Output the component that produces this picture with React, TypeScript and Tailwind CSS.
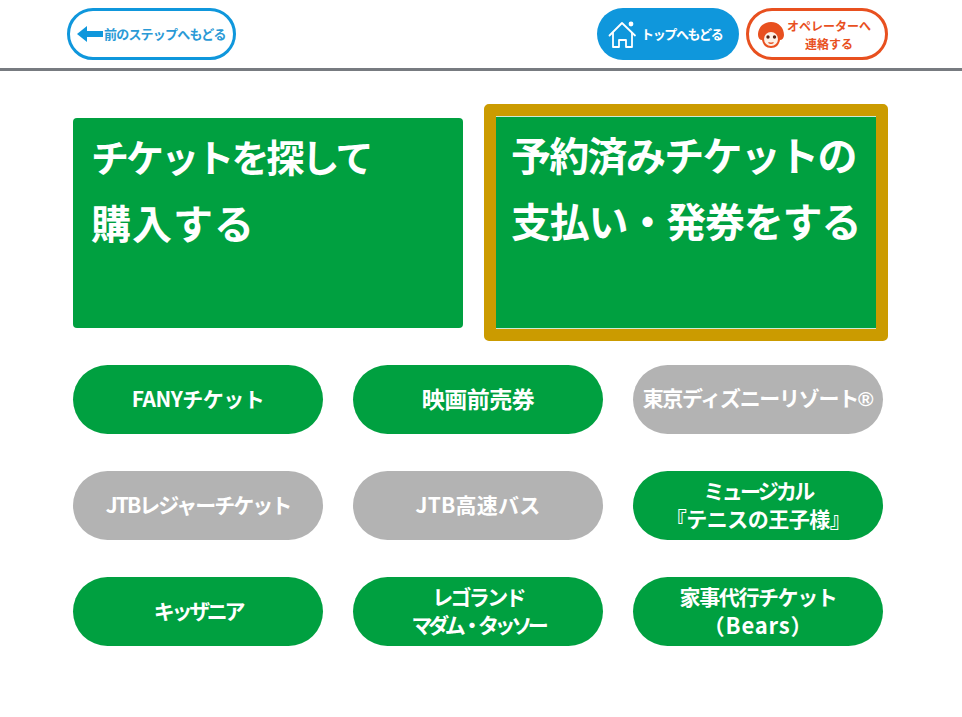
const font = { fontFamily: '"Noto Sans CJK JP", "Liberation Sans", sans-serif' };

const pills = [
  { lines: [{ text: 'FANYチケット', cls: 'tracking-[-0.5px]' }], on: true },
  { lines: [{ text: '映画前売券', cls: 'text-[23px] tracking-[-0.5px]' }], on: true },
  { lines: [{ text: '東京ディズニーリゾート', cls: 'tracking-[-1.3px]', mark: true }], on: false },
  { lines: [{ text: 'JTBレジャーチケット', cls: 'tracking-[-2px]' }], on: false },
  { lines: [{ text: 'JTB高速バス', cls: 'tracking-[0.2px]' }], on: false },
  {
    lines: [
      { text: 'ミュージカル', cls: 'tracking-[-2.8px]' },
      { text: '『テニスの王子様』', cls: 'tracking-[-0.5px]' },
    ],
    on: true,
  },
  { lines: [{ text: 'キッザニア', cls: 'tracking-[-3.3px]' }], on: true },
  {
    lines: [
      { text: 'レゴランド', cls: 'tracking-[-2.7px]' },
      { text: 'マダム・タッソー', cls: 'tracking-[-4.4px]' },
    ],
    on: true,
  },
  {
    lines: [
      { text: '家事代行チケット', cls: 'tracking-[-1.4px]' },
      { text: '（Bears）', cls: 'text-[22px] tracking-[0.8px]' },
    ],
    on: true,
  },
];

function HomeIcon() {
  return (
    <svg width="30" height="32" viewBox="0 0 30 32" fill="none" stroke="white" strokeWidth="1.8" strokeLinejoin="round" strokeLinecap="round" className="shrink-0">
      <path d="M1.5 17.5 L14 5 L27 17.5" />
      <path d="M5 15 V29 H11 V22 H18 V29 H24 V15" />
      <circle cx="23" cy="6" r="2.4" fill="white" stroke="none" />
    </svg>
  );
}

function OperatorIcon() {
  return (
    <svg width="28" height="28" viewBox="0 0 28 28" className="shrink-0">
      <path d="M14 1 C6 1 1 7 1 14 C1 17 3 19 5 19 C6 24 9 27 14 27 C19 27 22 24 23 19 C25 19 27 17 27 14 C27 7 22 1 14 1 Z" fill="#e8501f" />
      <circle cx="14" cy="18" r="7" fill="#fdf1e6" />
      <circle cx="11" cy="16" r="1.7" fill="#5a2412" />
      <circle cx="17.5" cy="16" r="1.7" fill="#5a2412" />
      <path d="M11.5 21.5 Q14 23 16.5 21.5" stroke="#e8501f" strokeWidth="1.4" fill="none" />
    </svg>
  );
}

export default function App() {
  return (
    <div className="h-[717px] w-[962px] bg-white" style={font}>
      {/* Header */}
      <div className="flex h-[71px] items-start border-b-[3px] border-[#777b80] pt-2 pr-[74px] pl-[67px]">
        <button className="flex h-[52px] w-[169px] items-center gap-[1px] rounded-full border-[3px] border-[#0f97dc] bg-white pl-[7px] text-[13px] font-bold tracking-[-0.8px] text-[#2a9ad6]">
          <svg width="26" height="16" viewBox="0 0 26 16" className="shrink-0">
            <path d="M0 8 L10 0 V5 H26 V11 H10 V16 Z" fill="#0f97dc" />
          </svg>
          前のステップへもどる
        </button>
        <button className="ml-auto flex h-[52px] w-[142px] items-center gap-[3px] rounded-full bg-[#0f97dc] pl-[11px] text-[13px] font-bold tracking-[-1.35px] text-white">
          <HomeIcon />
          トップへもどる
        </button>
        <button className="ml-[7px] flex h-[52px] w-[142px] items-center gap-[1px] rounded-full border-[3px] border-[#e8501f] bg-white pt-[1px] pl-[8px] text-[12px] leading-[18px] font-bold text-[#e8501f]">
          <OperatorIcon />
          <span className="flex-1 pr-[13px] text-center">
            オペレーターへ
            <br />
            連絡する
          </span>
        </button>
      </div>

      {/* Main cards */}
      <div className="flex items-start pt-[33px] pl-[73px]">
        <div className="mt-[14px] h-[210px] w-[390px] rounded-[4px] bg-[#00a040] pt-[4px] pl-[18px] leading-[67px] font-bold whitespace-nowrap text-white">
          <div className="text-[38px] tracking-[-2.9px]">チケットを探して</div>
          <div className="text-[40px] tracking-[1px]">購入する</div>
        </div>
        <div className="ml-[21px] h-[237px] w-[404px] rounded-[5px] border-[12px] border-[#cb9b00] bg-[#cb9b00]">
          <div className="h-full border-y border-[#cfe9d6] bg-[#00a040] pt-[4px] pl-[15px] text-[40px] leading-[66px] font-bold whitespace-nowrap text-white">
            <div className="tracking-[-1.7px]">予約済みチケットの</div>
            <div className="tracking-[-1.2px]">支払い・発券をする</div>
          </div>
        </div>
      </div>

      {/* Ticket buttons */}
      <div className="mt-[24px] ml-[73px] grid w-[810px] grid-cols-3 gap-x-[30px] gap-y-[37px]">
        {pills.map((pill) => (
          <div
            key={pill.lines[0].text}
            className={`flex h-[69px] flex-col items-center justify-center rounded-full pb-[3px] text-[21px] leading-[28px] font-bold whitespace-nowrap text-white ${pill.on ? 'bg-[#00a040]' : 'bg-[#b3b3b3]'}`}
          >
            {pill.lines.map((line) => (
              <span key={line.text} className={line.cls}>
                {line.text}
                {line.mark && <span className="font-['Liberation_Sans'] tracking-normal">®</span>}
              </span>
            ))}
          </div>
        ))}
      </div>
    </div>
  );
}
